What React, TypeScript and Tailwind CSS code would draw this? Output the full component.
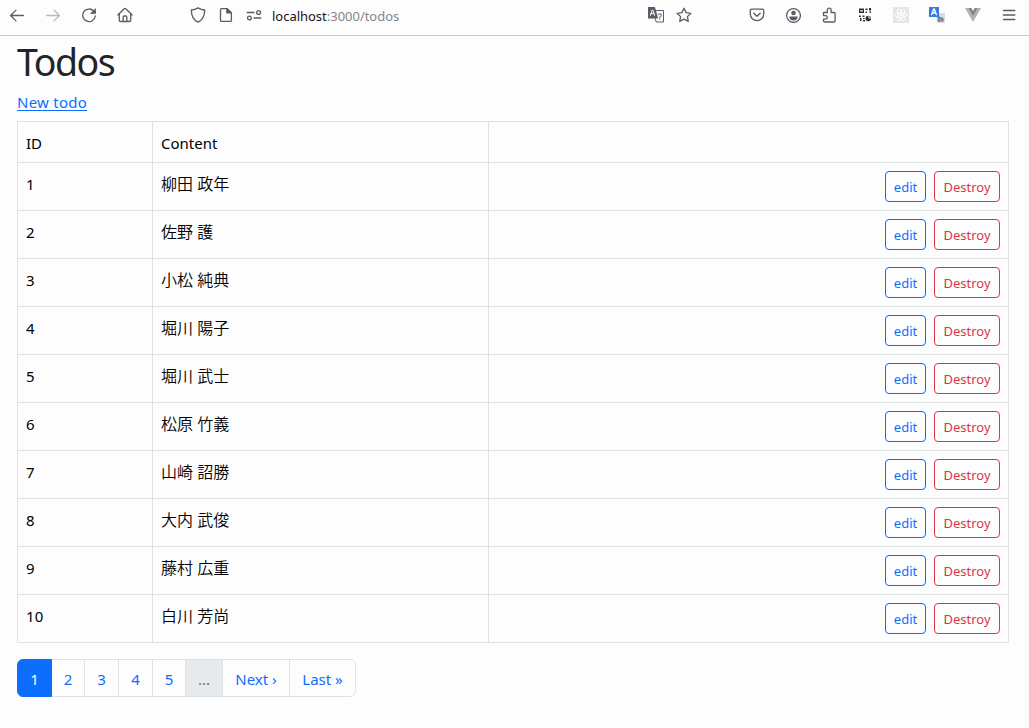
import React from "react";
import { cva, VariantProps } from "class-variance-authority";
import { twMerge } from "tailwind-merge";

const button = cva(
  [
    "flex h-[31px] items-center justify-center rounded-[4px] border text-[13px]",
  ],
  {
    variants: {
      colors: {
        primary: "w-[41px] border-[#0d6efd] text-[#0d6efd]",
        danger: "w-[66px] border-[#dc3545] text-[#dc3545]",
      },
    },
    defaultVariants: {
      colors: "primary",
    },
  },
);

const pageLink = cva(
  [
    "-ml-px flex h-[38px] items-center justify-center border border-[#dee2e6] pt-[3px] first:ml-0 first:rounded-l-md last:rounded-r-md",
  ],
  {
    variants: {
      state: {
        default: "text-[#0d6efd]",
        active: "z-10 border-[#0d6efd] bg-[#0d6efd] text-white",
        disabled: "bg-[#e6eaed] text-[#6c757d]",
      },
    },
    defaultVariants: {
      state: "default",
    },
  },
);

const todos = [
  { id: 1, content: "柳田 政年" },
  { id: 2, content: "佐野 護" },
  { id: 3, content: "小松 純典" },
  { id: 4, content: "堀川 陽子" },
  { id: 5, content: "堀川 武士" },
  { id: 6, content: "松原 竹義" },
  { id: 7, content: "山崎 詔勝" },
  { id: 8, content: "大内 武俊" },
  { id: 9, content: "藤村 広重" },
  { id: 10, content: "白川 芳尚" },
];

type TPage = {
  label: string;
  width: string;
} & VariantProps<typeof pageLink>;

const pages: TPage[] = [
  { label: "1", width: "w-[35px]", state: "active" },
  { label: "2", width: "w-[34px]" },
  { label: "3", width: "w-[35px]" },
  { label: "4", width: "w-[35px]" },
  { label: "5", width: "w-[34px]" },
  { label: "...", width: "w-[38px]", state: "disabled" },
  { label: "Next ›", width: "w-[68px]" },
  { label: "Last »", width: "w-[67px]" },
];

type TIcon = { className?: string; children: React.ReactNode };

const Icon = ({ className, children }: TIcon) => (
  <svg
    viewBox="0 0 16 16"
    fill="none"
    stroke="currentColor"
    strokeWidth="1.3"
    strokeLinecap="round"
    strokeLinejoin="round"
    className={twMerge("h-4 w-4 shrink-0 text-[#5b5b66]", className)}
  >
    {children}
  </svg>
);

const Toolbar = () => (
  <header className="flex h-9 items-center border-b border-[#cccccc] pr-3 pb-[5px] pl-[9px]">
    <div className="flex gap-5">
      <Icon>
        <path d="M14.4 8.5H1.6M7 3.1 1.6 8.5 7 13.9" />
      </Icon>
      <Icon className="text-[#b9b9be]">
        <path d="M1.6 8.5h12.8M9 3.1l5.4 5.4L9 13.9" />
      </Icon>
      <Icon>
        <path d="M12.8 4.2A6.3 6.3 0 1 0 14.3 9" />
        <path d="M14.5 2v4.5H10z" fill="currentColor" strokeWidth="0.8" />
      </Icon>
      <Icon>
        <path d="M.9 8 7.2 1.7a1.1 1.1 0 0 1 1.6 0L15.1 8" />
        <path d="M2.3 7v6.2c0 .8.5 1.3 1.3 1.3h8.8c.8 0 1.3-.5 1.3-1.3V7" />
        <path d="M6.2 14.3V10c0-.7.4-1 1-1h1.6c.6 0 1 .3 1 1v4.3" />
      </Icon>
    </div>
    <div className="ml-[57px] flex items-center gap-3">
      <Icon>
        <path d="M8 .9c2 1.3 4.3 2 6.7 2.1 0 5.9-1.7 9.8-6.7 12.2C3 12.8 1.3 8.9 1.3 3 3.7 2.9 6 2.2 8 .9z" />
      </Icon>
      <Icon>
        <path d="M3.5 1.6h5.6l4.3 4.2v7.6a1 1 0 0 1-1 1H3.5a1 1 0 0 1-1-1V2.6a1 1 0 0 1 1-1z" />
        <path d="M8.9 1.8v4.1h4.3z" fill="currentColor" />
      </Icon>
      <Icon>
        <path d="M1.2 5.5H8M8 11h6.8" />
        <circle cx="12.6" cy="5.5" r="1.9" />
        <circle cx="3.4" cy="11" r="1.9" />
      </Icon>
    </div>
    <p className="ml-[10px] pt-[2px] text-[13px] leading-4 tracking-[-0.02px] text-[#85858b]">
      <span className="text-[#15141a]">localhost</span>:3000/todos
    </p>
    <div className="ml-auto flex gap-3">
      <Icon>
        <path
          d="M0 0h6.7l1.2 3 2.2 8.5H0z"
          fill="currentColor"
          stroke="none"
        />
        <path d="M8.5 3.5h7V15H8.3L7 11.5" strokeWidth="1" />
        <path
          d="M2.4 8.4 4.2 3h.6l1.8 5.4M3 6.7h3"
          stroke="#ffffff"
          strokeWidth="1"
        />
        <path
          d="M10.5 7.5c.8-1.2 3-.8 2.8.7-.1 1-1.5 1-1.5 2.3M11.8 12v.3"
          stroke="#7b7ba0"
        />
      </Icon>
      <Icon>
        <path d="m8 1.3 2.1 4.3 4.8.7-3.5 3.3.9 4.8L8 12.2l-4.3 2.2.9-4.8L1.1 6.3l4.8-.7z" />
      </Icon>
    </div>
    <div className="ml-[57px] flex gap-5">
      <Icon>
        <path d="M2.6 2.1h10.8c.8 0 1.3.5 1.3 1.3v3.8a6.7 6.4 0 0 1-13.4 0V3.4c0-.8.5-1.3 1.3-1.3z" />
        <path d="m4.8 6.2 3.2 3 3.2-3" />
      </Icon>
      <Icon>
        <circle cx="8.5" cy="8.5" r="6.9" />
        <circle cx="8.5" cy="6" r="2.3" fill="currentColor" stroke="none" />
        <path
          d="M4.3 9.5h8.4a4.2 3.9 0 0 1-8.4 0z"
          fill="currentColor"
          stroke="none"
        />
      </Icon>
      <Icon>
        <path d="M2.5 5.5h3.8V3a1.9 1.9 0 0 1 3.8 0v2.5h2.7c.8 0 1.3.5 1.3 1.3v6.9c0 .8-.5 1.3-1.3 1.3H3.8c-.8 0-1.3-.5-1.3-1.3v-1.5h2a1.8 1.8 0 0 0 0-3.6h-2z" />
      </Icon>
      <Icon className="text-[#303030]">
        <path
          d="M2 1.5h5V6H2zM8.5 1.5h2V3h-2zM12 1h2v2.5h-2zM8.5 4.5H10V6H8.5zM12.5 4.5H14V6h-1.5zM2 8.5h2V10H2zM5.500 8.500h2V10h-2zM3 11h1.500v3H3zM6 11h1.500v1H6zM6 13h2v1.500H6z"
          fill="currentColor"
          stroke="none"
        />
        <path d="M3.7 3.8h1.600" stroke="#ffffff" />
        <circle cx="11.3" cy="11.5" r="2.8" fill="currentColor" stroke="none" />
        <path d="M11.900 8.500V11h2.500" stroke="#ffffff" strokeWidth="0.9" />
      </Icon>
      <Icon className="text-white">
        <path d="M0 0h16v16H0z" fill="#e3e6e9" stroke="none" />
        <g strokeWidth="0.9">
          <ellipse cx="8" cy="8" rx="6.3" ry="2.4" />
          <ellipse
            cx="8"
            cy="8"
            rx="6.3"
            ry="2.4"
            transform="rotate(60 8 8)"
          />
          <ellipse
            cx="8"
            cy="8"
            rx="6.3"
            ry="2.4"
            transform="rotate(120 8 8)"
          />
        </g>
        <circle cx="8" cy="8" r="1.2" fill="currentColor" stroke="none" />
      </Icon>
      <Icon>
        <path d="M7 6h9v10H8z" fill="#dadde0" stroke="none" />
        <path d="M0 0h10v10H0z" fill="#2f7de9" stroke="none" />
        <path d="M2.5 7.7 4.7 2h.6l2.2 5.7M3.300 6h3.400" stroke="#ffffff" />
        <path
          d="M8.5 10.8H12M10 9.3c-.3 1.7 0 3.3.5 4.7M13.5 11c-.8 2-2.6 3.5-4 3.200-1.500-.4.300-2.900 2.900-2.800 2.500.2 2.400 2.500.5 3"
          stroke="#607d8b"
          strokeWidth="1.1"
        />
      </Icon>
      <Icon>
        <path d="M0 1h3.5L8 9l4.500-8H16L8 15z" fill="#b2b2b2" stroke="none" />
        <path d="M3.3 1h3L8 4l1.700-3h3L8 9.300z" fill="#838383" stroke="none" />
      </Icon>
      <Icon>
        <path d="M2.4 3.5h11.400M2.400 8h11.400M2.400 12.500h11.400" />
      </Icon>
    </div>
  </header>
);

const TodoTable = () => (
  <table className="mt-[7px] w-[992px] table-fixed border-collapse leading-6 text-black">
    <colgroup>
      <col className="w-[135px]" />
      <col className="w-[336px]" />
      <col />
    </colgroup>
    <thead>
      <tr className="h-[41px]">
        {["ID", "Content", ""].map((title) => (
          <th
            key={title}
            className="border border-[#dee2e6] px-2 pt-px text-left font-normal"
          >
            {title}
          </th>
        ))}
      </tr>
    </thead>
    <tbody>
      {todos.map((todo) => (
        <tr key={todo.id} className="h-12 align-top">
          <td className="border border-[#dee2e6] px-2 pt-[9px] tracking-[0.2px]">
            {todo.id}
          </td>
          <td className="border border-[#dee2e6] px-2 pt-[9px] text-base leading-6 font-[350]">
            {todo.content}
          </td>
          <td className="border border-[#dee2e6] px-2 pt-2">
            <div className="flex justify-end gap-2">
              <button className={button({ colors: "primary" })}>edit</button>
              <button className={button({ colors: "danger" })}>Destroy</button>
            </div>
          </td>
        </tr>
      ))}
    </tbody>
  </table>
);

const Pagination = () => (
  <nav className="mt-4 flex">
    {pages.map(({ label, width, state }) => (
      <a key={label} className={twMerge(pageLink({ state }), width)}>
        {label}
      </a>
    ))}
  </nav>
);

export default function App() {
  return (
    <div className="h-[728px] overflow-hidden bg-[#fdfdfd] font-['Noto_Sans','Noto_Sans_CJK_JP',sans-serif] text-[15px] text-[#212529]">
      <Toolbar />
      <main className="px-[17px]">
        <h1 className="pt-[2px] text-[37.5px] leading-[48px] tracking-[-1.5px]">
          Todos
        </h1>
        <a className="mt-[4px] block w-fit leading-6 tracking-[0.25px] text-[#0d6efd] underline underline-offset-2">
          New todo
        </a>
        <TodoTable />
        <Pagination />
      </main>
    </div>
  );
}
